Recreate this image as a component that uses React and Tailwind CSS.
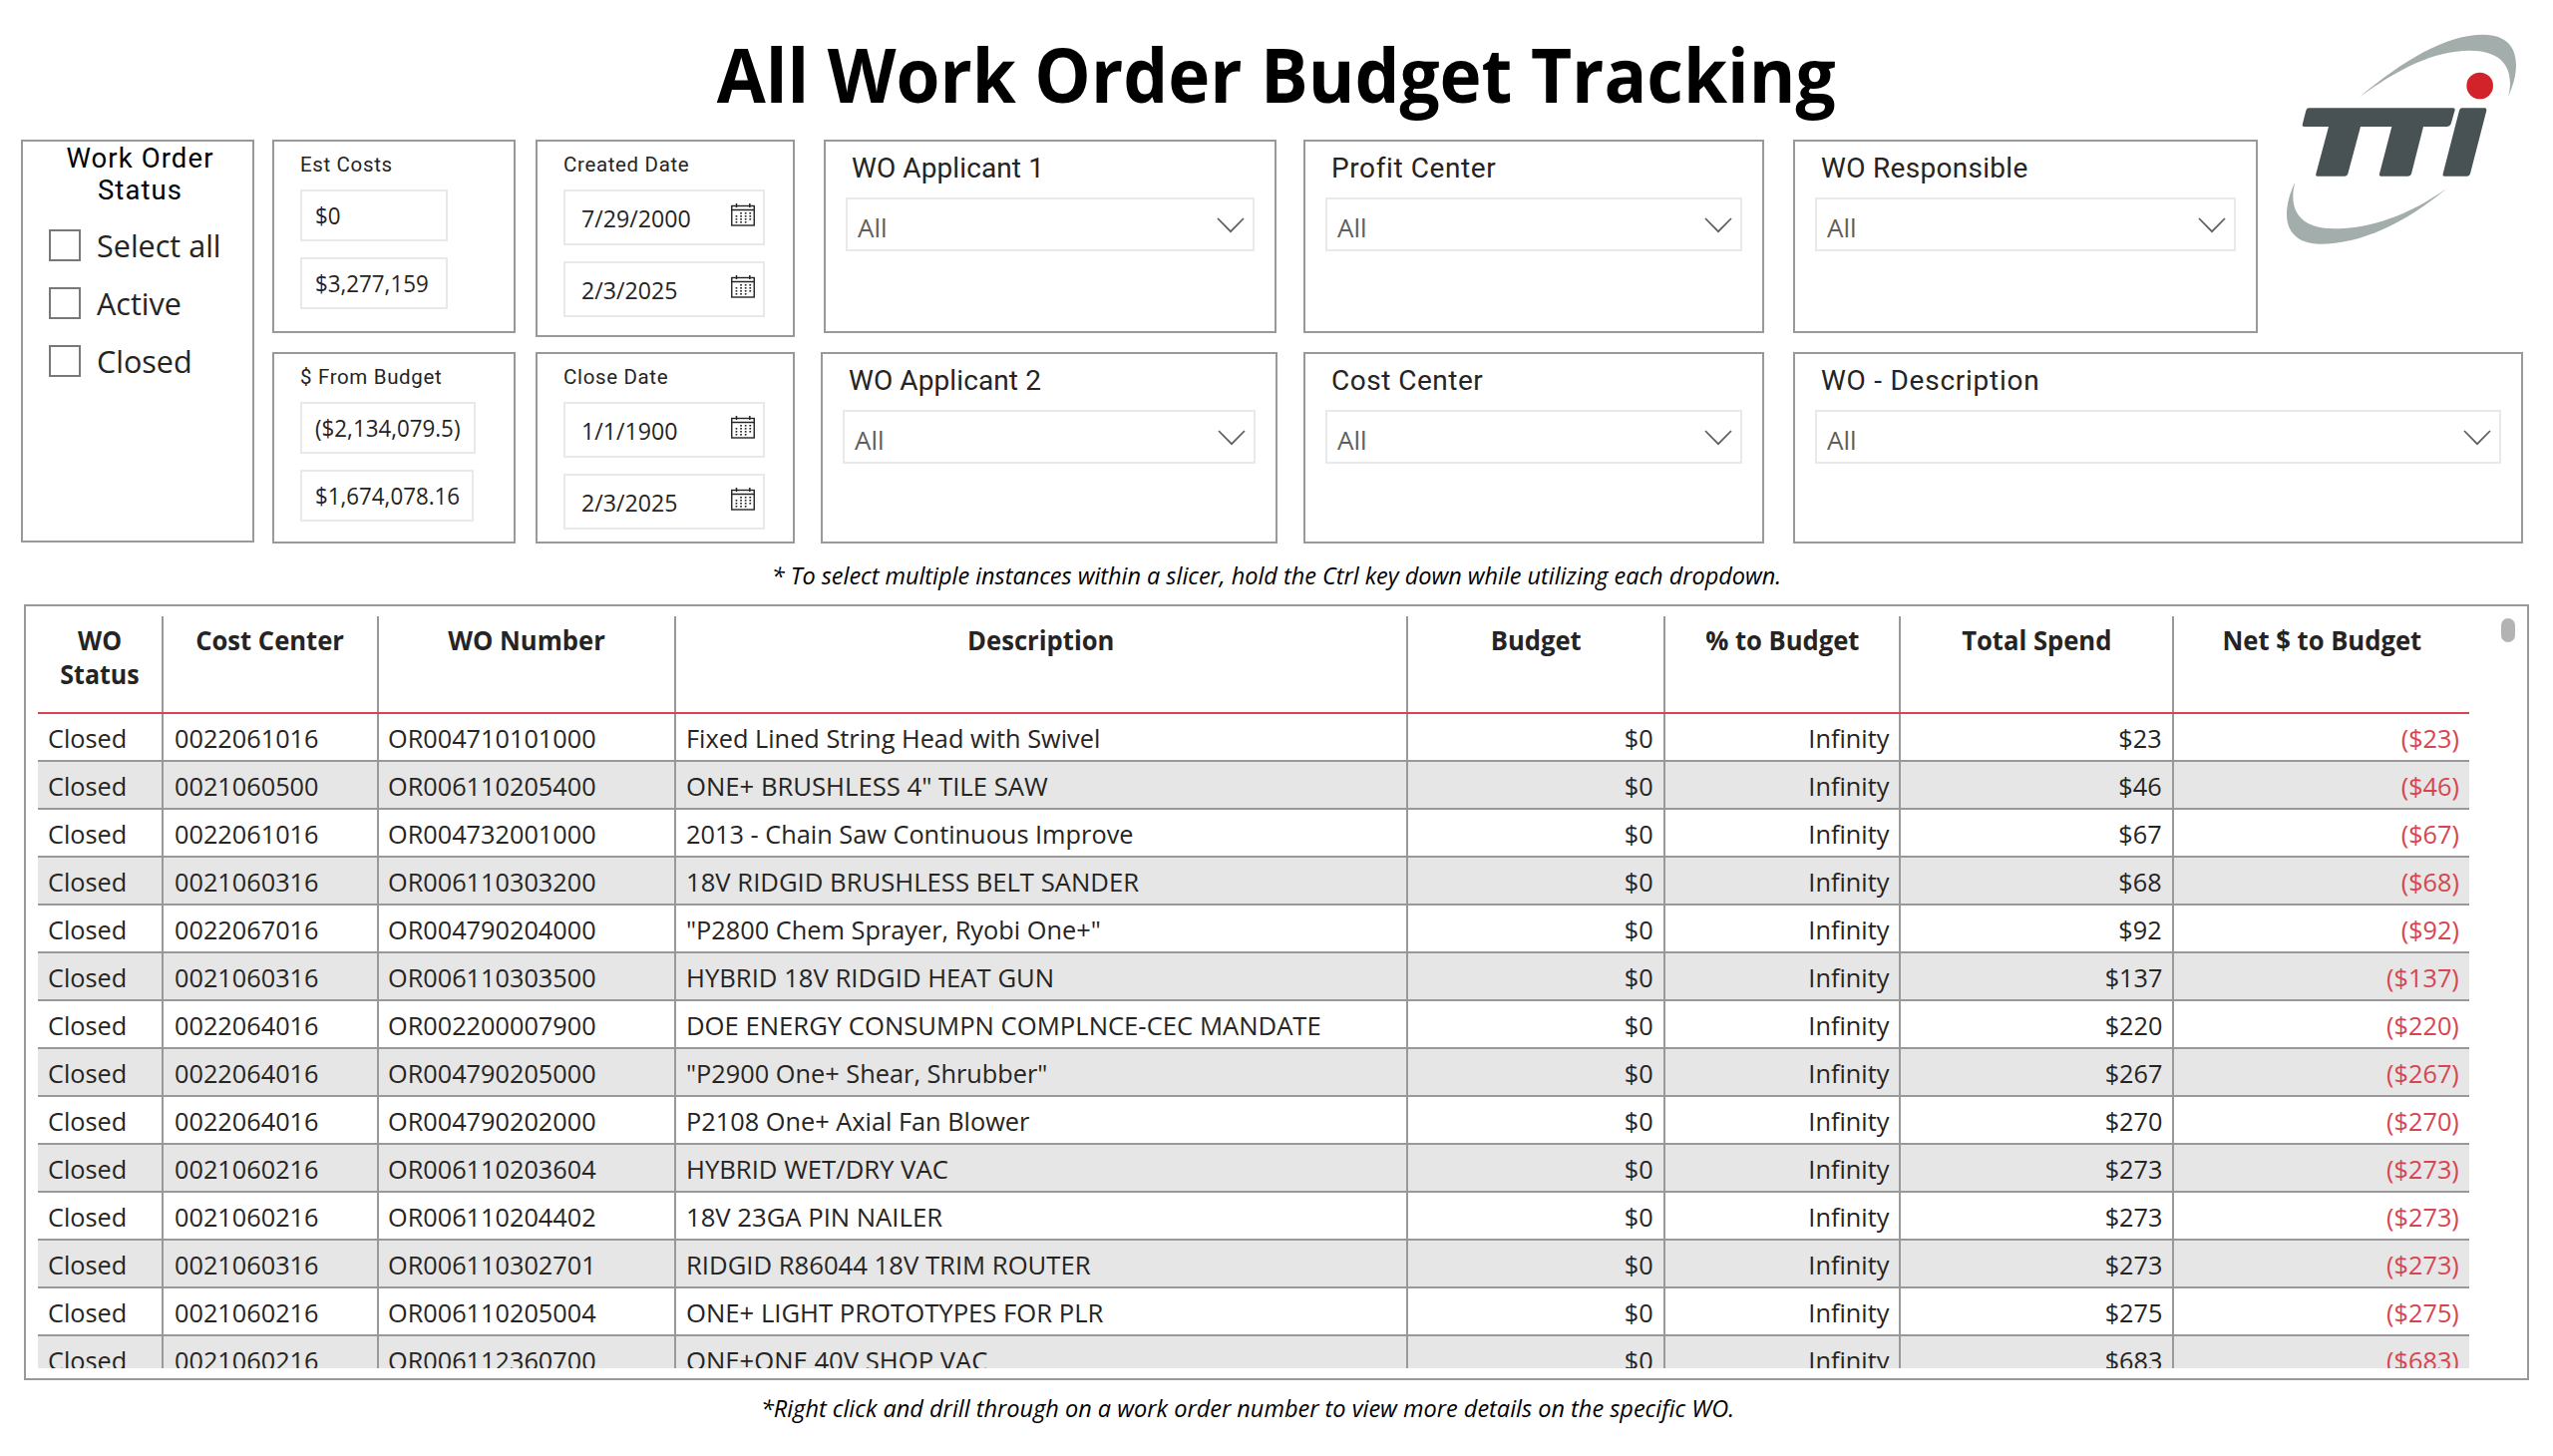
import React from "react";
import clsx from "clsx";

const SEGOE = "font-['Open_Sans','Noto_Sans',sans-serif]";
const DIN = "font-[Roboto,'Noto_Sans',sans-serif]";

const rows = [
  ["Closed", "0022061016", "OR004710101000", "Fixed Lined String Head with Swivel", "$0", "Infinity", "$23", "($23)"],
  ["Closed", "0021060500", "OR006110205400", 'ONE+ BRUSHLESS 4" TILE SAW', "$0", "Infinity", "$46", "($46)"],
  ["Closed", "0022061016", "OR004732001000", "2013 - Chain Saw Continuous Improve", "$0", "Infinity", "$67", "($67)"],
  ["Closed", "0021060316", "OR006110303200", "18V RIDGID BRUSHLESS BELT SANDER", "$0", "Infinity", "$68", "($68)"],
  ["Closed", "0022067016", "OR004790204000", '"P2800 Chem Sprayer, Ryobi One+"', "$0", "Infinity", "$92", "($92)"],
  ["Closed", "0021060316", "OR006110303500", "HYBRID 18V RIDGID HEAT GUN", "$0", "Infinity", "$137", "($137)"],
  ["Closed", "0022064016", "OR002200007900", "DOE ENERGY CONSUMPN COMPLNCE-CEC MANDATE", "$0", "Infinity", "$220", "($220)"],
  ["Closed", "0022064016", "OR004790205000", '"P2900 One+ Shear, Shrubber"', "$0", "Infinity", "$267", "($267)"],
  ["Closed", "0022064016", "OR004790202000", "P2108 One+ Axial Fan Blower", "$0", "Infinity", "$270", "($270)"],
  ["Closed", "0021060216", "OR006110203604", "HYBRID WET/DRY VAC", "$0", "Infinity", "$273", "($273)"],
  ["Closed", "0021060216", "OR006110204402", "18V 23GA PIN NAILER", "$0", "Infinity", "$273", "($273)"],
  ["Closed", "0021060316", "OR006110302701", "RIDGID R86044 18V TRIM ROUTER", "$0", "Infinity", "$273", "($273)"],
  ["Closed", "0021060216", "OR006110205004", "ONE+ LIGHT PROTOTYPES FOR PLR", "$0", "Infinity", "$275", "($275)"],
  ["Closed", "0021060216", "OR006112360700", "ONE+ONE 40V SHOP VAC", "$0", "Infinity", "$683", "($683)"],
];

const columns = [
  { name: "WO Status", width: "w-[126px]" },
  { name: "Cost Center", width: "w-[216px]" },
  { name: "WO Number", width: "w-[298px]" },
  { name: "Description", width: "w-[734px]" },
  { name: "Budget", width: "w-[258px]" },
  { name: "% to Budget", width: "w-[236px]" },
  { name: "Total Spend", width: "w-[274px]" },
  { name: "Net $ to Budget", width: "w-[296px]" },
];

// Capitals-only descriptions run slightly wider than mixed-case ones.
const descriptionScale = (text) => (text === text.toUpperCase() ? "scale-x-[0.987]" : "scale-x-[0.974]");

function Logo() {
  return (
    <svg viewBox="0 0 840 720" className="h-[240px] w-[280px] shrink-0" aria-label="TTI">
      <g fill="#a3adab">
        <path d="M288 232C420 120 550 44 660 44C735 44 759 88 759 135C759 170 748 202 736 230C739 214 741 205 741 190C741 128 700 92 620 92C510 92 400 150 288 232Z" />
        <path d="M551 506C425 612 290 674 170 674C100 674 69 635 69 585C69 555 78 520 94 488C90 505 88 515 88 532C88 592 130 628 210 628C320 628 435 588 551 506Z" />
      </g>
      <g fill="#485254">
        <path d="M136 265H570Q576 265 575 271L563 313Q560 321 552 321H480L444 463Q442 470 434 470H353Q346 470 348 463L385 321H291L253 463Q251 470 244 470H161Q155 470 157 463L195 321H121Q115 321 116 315L127 272Q129 265 136 265Z" />
        <path d="M597 265H665Q671 265 670 272L621 463Q619 470 612 470H543Q537 470 539 463L588 272Q590 265 597 265Z" />
      </g>
      <circle cx="650" cy="198" r="40" fill="#d2222a" />
    </svg>
  );
}

function CalendarIcon() {
  const dots = [
    [1, 2, 3],
    [0, 1, 2, 3],
    [0, 1, 2, 3],
    [0, 1, 2],
  ];
  return (
    <svg viewBox="0 0 24 24" className="mt-[12px] h-6 w-6 shrink-0 self-start" fill="none" stroke="#252423">
      <rect x="0.75" y="2.5" width="22.5" height="19.5" strokeWidth="1.4" />
      <path d="M0.5 6.5H23.5M5.5 0V4M18.8 0V4" strokeWidth="1.5" />
      {dots.map((cols, r) =>
        cols.map((c) => (
          <rect key={`${r}-${c}`} x={4.6 + c * 4.6} y={9 + r * 3} width="1.7" height="1.6" fill="#252423" stroke="none" />
        ))
      )}
    </svg>
  );
}

function Card({ className, children }) {
  return <section className={clsx("flex flex-col border-2 border-[#999999]", className)}>{children}</section>;
}

function SmallLabel({ children }) {
  return <h2 className={clsx(DIN, "text-[20.5px] leading-[24px] tracking-[0.65px] text-[#252423]")}>{children}</h2>;
}

function RangeCard({ title, values, className }) {
  return (
    <Card className={clsx("w-[244px] pt-[11px] pl-[26px]", className)}>
      <SmallLabel>{title}</SmallLabel>
      <div className="mt-[13px] flex flex-col items-start gap-4">
        {values.map(([value, width]) => (
          <div key={value} className={clsx("flex h-[52px] items-center border-2 border-[#e9e9e9] pl-[13px]", width)}>
            <span className="inline-block origin-left scale-x-[0.95] pt-[2px] text-[23.5px] whitespace-nowrap">{value}</span>
          </div>
        ))}
      </div>
    </Card>
  );
}

function DateCard({ title, values, className }) {
  return (
    <Card className={clsx("pt-[11px] pl-[26px]", className)}>
      <SmallLabel>{title}</SmallLabel>
      <div className="mt-[13px] flex flex-col gap-4">
        {values.map((value) => (
          <div key={value} className="flex h-[56px] w-[202px] items-center justify-between border-2 border-[#e9e9e9] pr-[8px] pl-[16px]">
            <span className="inline-block origin-left scale-x-[0.985] pt-[3px] text-[23.5px] whitespace-nowrap">{value}</span>
            <CalendarIcon />
          </div>
        ))}
      </div>
    </Card>
  );
}

function DropdownCard({ title, tracking, className }) {
  return (
    <Card className={clsx("px-5 pt-[11px]", className)}>
      <h2 className={clsx(DIN, "pl-[6px] text-[28px] leading-[32px] text-[#252423]", tracking)}>{title}</h2>
      <div className="mt-[13px] flex h-[54px] items-center justify-between border-2 border-[#e9e9e9] pr-[8px] pl-[10px] text-[#605e5c]">
        <span className="pt-[7px] text-[26px]">All</span>
        <svg viewBox="0 0 28 16" className="mt-px h-4 w-7" fill="none" stroke="#605e5c" strokeWidth="1.7">
          <path d="M1 1L14 14.2L27 1" />
        </svg>
      </div>
    </Card>
  );
}

function StatusCard() {
  return (
    <Card className="h-[404px] w-[234px]">
      <h2 className={clsx(DIN, "pt-px pl-[5px] text-center text-[27.5px] leading-[32px] tracking-[1.1px] text-black")}>
        Work Order
        <br />
        Status
      </h2>
      <div className="mt-[23px] flex flex-col gap-[26px] pl-[26px]">
        {["Select all", "Active", "Closed"].map((label) => (
          <label key={label} className="flex h-8 items-center gap-[16px]">
            <span className="h-8 w-8 border-2 border-[#7a7876]" />
            <span className="inline-block origin-left scale-x-[0.985] text-[31px] leading-8 whitespace-nowrap">{label}</span>
          </label>
        ))}
      </div>
    </Card>
  );
}

function WorkOrderTable() {
  return (
    <table className="w-[2438px] table-fixed border-separate border-spacing-0 text-[26px]">
      <thead>
        <tr>
          {columns.map(({ name, width }, i) => (
            <th key={name} className={clsx("border-b-2 border-[#d64550] p-0 font-bold", width)}>
              <div className={clsx("flex h-[96px] justify-center px-2 pt-[7px] text-center leading-[34px]", i < 7 && "border-r-2 border-[#999999]")}>
                <span className={clsx("inline-block", i === 0 ? "w-[90px] scale-x-[0.96]" : "scale-x-[0.985] whitespace-nowrap")}>{name}</span>
              </div>
            </th>
          ))}
        </tr>
      </thead>
      <tbody>
        {rows.map((row, r) => (
          <tr key={row[2]} className={r % 2 ? "bg-[#e6e6e6]" : "bg-white"}>
            {row.map((cell, c) => (
              <td
                key={c}
                className={clsx(
                  "h-12 border-b-2 border-[#999999] pt-px pb-0 leading-[45px] whitespace-nowrap",
                  c < 7 && "border-r-2",
                  c < 4 ? "text-left" : "pr-[10px] text-right",
                  c === 1 && "pl-[11px]",
                  (c === 0 || c === 3) && "pl-[10px]",
                  c === 2 && "pl-[9px]",
                  c === 7 && "text-[#d64550]"
                )}
              >
                <span
                  className={clsx(
                    "inline-block pt-px align-top leading-[44px]",
                    c < 4 ? "origin-left" : "origin-right",
                    c === 3 ? descriptionScale(cell) : "scale-x-[0.972]"
                  )}
                >
                  {cell}
                </span>
              </td>
            ))}
          </tr>
        ))}
      </tbody>
    </table>
  );
}

export default function App() {
  return (
    <main className={clsx(SEGOE, "h-[1460px] w-[2560px] overflow-hidden bg-white text-[#252423]")}>
      <header className="grid h-[140px] grid-cols-[1fr_auto_1fr] items-start">
        <span />
        <h1 className="mt-[24px] origin-center scale-x-[0.948] text-[75px] leading-[100px] font-bold whitespace-nowrap text-black">
          All Work Order Budget Tracking
        </h1>
        <div className="flex justify-end pt-5 pr-[10px]">
          <Logo />
        </div>
      </header>

      <div className="flex h-[405px] pl-[21px]">
        <StatusCard />
        <div className="ml-[18px] flex flex-col justify-between">
          <RangeCard title="Est Costs" className="h-[194px]" values={[["$0", "w-[148px]"], ["$3,277,159", "w-[148px]"]]} />
          <RangeCard title="$ From Budget" className="h-[192px]" values={[["($2,134,079.5)", "w-[176px]"], ["$1,674,078.16", "w-[174px]"]]} />
        </div>
        <div className="ml-5 flex w-[260px] flex-col justify-between">
          <DateCard title="Created Date" className="h-[198px]" values={["7/29/2000", "2/3/2025"]} />
          <DateCard title="Close Date" className="h-[192px]" values={["1/1/1900", "2/3/2025"]} />
        </div>
        <div className="ml-[26px] flex w-[458px] flex-col justify-between">
          <DropdownCard title="WO Applicant 1" tracking="tracking-[0.1px]" className="ml-[3px] h-[194px] w-[454px]" />
          <DropdownCard title="WO Applicant 2" tracking="tracking-[0.1px]" className="h-[192px]" />
        </div>
        <div className="ml-[26px] flex w-[462px] flex-col justify-between">
          <DropdownCard title="Profit Center" tracking="tracking-[0.6px]" className="h-[194px]" />
          <DropdownCard title="Cost Center" tracking="tracking-[0.5px]" className="h-[192px]" />
        </div>
        <div className="ml-[29px] flex w-[732px] flex-col justify-between">
          <DropdownCard title="WO Responsible" tracking="tracking-[0.3px]" className="h-[194px] w-[466px]" />
          <DropdownCard title="WO - Description" tracking="tracking-[0.75px]" className="h-[192px]" />
        </div>
      </div>

      <p className="mt-3 text-center text-[23.5px] leading-10 tracking-[-0.03px] text-black italic">
        * To select multiple instances within a slicer, hold the Ctrl key down while utilizing each dropdown.
      </p>

      <section className="mt-[9px] ml-6 flex h-[778px] w-[2512px] items-start border-2 border-[#999999] pt-[10px] pl-[12px]">
        <div className="h-[754px] w-[2438px] overflow-hidden">
          <WorkOrderTable />
        </div>
        <div className="mt-[2px] ml-8 h-6 w-[14px] rounded-full bg-[#b3b3b3]" />
      </section>

      <p className="mt-2 pr-[58px] text-center text-[23.5px] leading-10 text-black italic">
        *Right click and drill through on a work order number to view more details on the specific WO.
      </p>
    </main>
  );
}
